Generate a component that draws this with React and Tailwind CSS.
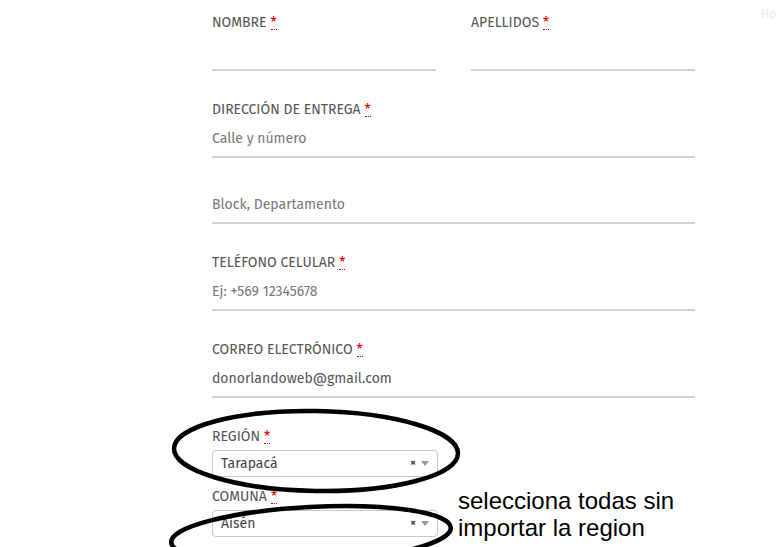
import React from "react";

const font = { fontFamily: '"Fira Sans", "Open Sans", "Noto Sans", sans-serif' };

function Req() {
  return (
    <abbr className="text-[#e00] no-underline ml-[4px] border-b border-dotted border-[#e00] leading-[10px] inline-block h-[12px]" title="obligatorio">*</abbr>
  );
}

function Label({ children }) {
  return (
    <div className="h-4 leading-4 pt-[1px] text-[14px] text-[#555] uppercase whitespace-nowrap">
      {children}
      <Req />
    </div>
  );
}

function Field({ placeholder, value }) {
  return (
    <div className="h-[41px] pt-[3px] border-b-2 border-[#d2d2d2] flex items-center text-[14px]">
      {value ? (
        <span className="text-[#555]">{value}</span>
      ) : (
        <span className="text-[#777]">{placeholder}</span>
      )}
    </div>
  );
}

function Select({ value }) {
  return (
    <div className="w-[226px] h-[27px] border border-[#c8c8c8] rounded-[4px] flex items-center pl-2 pr-2 text-[14px] text-[#444] bg-white">
      <span className="flex-1">{value}</span>
      <span className="text-[#444] text-[11px] font-bold mr-[5px]">×</span>
      <span className="w-0 h-0 border-l-[4px] border-r-[4px] border-t-[5px] border-l-transparent border-r-transparent border-t-[#999]" />
    </div>
  );
}

export default function App() {
  return (
    <div className="relative w-[777px] h-[547px] overflow-hidden bg-white" style={font}>
      <div className="absolute right-[1px] top-[5px] text-[12px] text-[#eaeaea]">Ho</div>
      <div className="pl-[212px] pt-[14px] w-[695px] box-content">
        <div className="grid grid-cols-2 gap-x-[35px] w-[483px]">
          <div>
            <Label>Nombre</Label>
            <Field />
          </div>
          <div>
            <Label>Apellidos</Label>
            <Field />
          </div>
        </div>
        <div className="w-[483px] mt-[30px]">
          <Label>Dirección de entrega</Label>
          <Field placeholder="Calle y número" />
          <div className="mt-[25px]">
            <Field placeholder="Block, Departamento" />
          </div>
        </div>
        <div className="w-[483px] mt-[30px]">
          <Label>Teléfono celular</Label>
          <Field placeholder="Ej: +569 12345678" />
        </div>
        <div className="w-[483px] mt-[30px]">
          <Label>Correo electrónico</Label>
          <Field value="donorlandoweb@gmail.com" />
        </div>
        <div className="w-[483px] mt-[30px]">
          <Label>Región</Label>
          <div className="mt-[6px]">
            <Select value="Tarapacá" />
          </div>
        </div>
        <div className="w-[483px] mt-[11px]">
          <Label>Comuna</Label>
          <div className="mt-[6px]">
            <Select value="Aisén" />
          </div>
        </div>
      </div>

      <svg className="absolute left-0 top-0 pointer-events-none" width="777" height="547">
        <ellipse cx="316" cy="451" rx="142" ry="40" fill="none" stroke="#000" strokeWidth="4.5" transform="rotate(1 316 451)" />
        <ellipse cx="311" cy="535" rx="140" ry="28" fill="none" stroke="#000" strokeWidth="4.5" transform="rotate(-3 311 535)" />
      </svg>

      <div
        className="absolute left-[458px] top-[487px] text-[24px] leading-[27px] text-black"
        style={{ fontFamily: '"Liberation Sans", Arial, sans-serif' }}
      >
        selecciona todas sin
        <br />
        importar la region
      </div>
    </div>
  );
}
